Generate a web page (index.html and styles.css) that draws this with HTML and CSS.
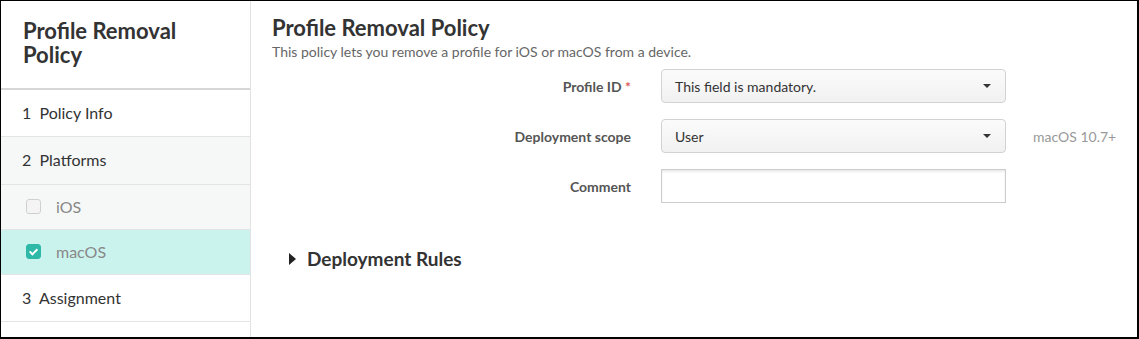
FILE: index.html
```html
<!DOCTYPE html>
<html lang="en">
<head>
  <meta charset="UTF-8" />
  <title>Profile Removal Policy</title>
  <link rel="stylesheet" href="styles.css">
</head>
<body>
  <div class="frame">
    <div class="sidebar">
      <div class="side-title">Profile Removal Policy</div>
      <div class="step s1">1&nbsp; Policy Info</div>
      <div class="step s2 grey">2&nbsp; Platforms</div>
      <div class="step s3 grey sub"><span class="check"></span>iOS</div>
      <div class="step s3 sub active"><span class="check on"></span>macOS</div>
      <div class="step s1">3&nbsp; Assignment</div>
    </div>

    <div class="main">
      <h1>Profile Removal Policy</h1>
      <p class="desc">This policy lets you remove a profile for iOS or macOS from a device.</p>

      <div class="form">
        <div class="row">
          <label>Profile ID <span class="req">*</span></label>
          <div class="select">This field is mandatory.<span class="caret"></span></div>
        </div>
        <div class="row">
          <label>Deployment scope</label>
          <div class="select">User<span class="caret"></span></div>
          <span class="hint">macOS 10.7+</span>
        </div>
        <div class="row">
          <label>Comment</label>
          <input class="text" type="text" />
        </div>
      </div>

      <div class="rules"><span class="tri"></span>Deployment Rules</div>
    </div>
  </div>
</body>
</html>
```

FILE: styles.css
```css
body {
  margin: 0;
  font-family: Lato, 'Noto Sans', sans-serif;
  color: #333;
  background: #fff;
}
.frame {
  display: flex;
  height: 339px;
  box-sizing: border-box;
  border: 1px solid #000;
  border-right-width: 2px;
  border-bottom-width: 2px;
}
.sidebar {
  width: 249px;
  border-right: 1px solid #e2e2e2;
  flex-shrink: 0;
}
.side-title {
  height: 89px;
  box-sizing: border-box;
  padding: 18px 22px 0;
  font-size: 22px;
  font-weight: 700;
  line-height: 24px;
  border-bottom: 2px solid #d6d6d6;
}
.step {
  box-sizing: border-box;
  display: flex;
  align-items: center;
  padding-left: 21px;
  padding-bottom: 2px;
  font-size: 16px;
  border-bottom: 1px solid #e4e4e4;
}
.s1 { height: 47px; }
.s2 { height: 48px; }
.s3 { height: 45px; }
.step.grey {
  background: #f6f8f8;
}
.step.sub {
  padding-left: 25px;
  color: #888;
}
.step.active {
  background: #cbf3ee;
}
.check {
  width: 13px;
  height: 13px;
  border: 1px solid #d0d0d0;
  border-radius: 3px;
  background: #f4f4f4;
  margin-right: 15px;
  position: relative;
}
.check.on {
  background: #2eb8a8;
  border-color: #2eb8a8;
}
.check.on::after {
  content: '';
  position: absolute;
  left: 4px;
  top: 2px;
  width: 3px;
  height: 6px;
  border: solid #fff;
  border-width: 0 2px 2px 0;
  transform: rotate(45deg);
}
.main {
  flex: 1;
  padding: 14px 0 0 21px;
}
h1 {
  margin: 0;
  font-size: 22px;
  font-weight: 700;
  line-height: 26px;
}
.desc {
  margin: 2px 0 0;
  font-size: 14px;
  color: #666;
}
.form {
  margin-top: 9px;
}
.row {
  display: flex;
  align-items: center;
  margin-bottom: 16px;
}
.row label {
  width: 389px;
  text-align: right;
  font-size: 14px;
  font-weight: 700;
  color: #555;
  padding-right: 30px;
  box-sizing: border-box;
}
.req {
  color: #e05a5a;
}
.select, .text {
  width: 345px;
  height: 34px;
  box-sizing: border-box;
  border: 1px solid #d2d2d2;
  border-radius: 4px;
}
.select {
  display: flex;
  align-items: center;
  justify-content: space-between;
  padding: 0 14px 0 13px;
  font-size: 14px;
  color: #333;
  background: linear-gradient(#fbfbfb, #f1f1f1);
}
.caret {
  border-left: 4px solid transparent;
  border-right: 4px solid transparent;
  border-top: 4px solid #333;
}
.text {
  border-radius: 0;
  border-color: #ccc;
  box-shadow: inset 0 2px 2px rgba(0, 0, 0, 0.08);
  font-family: inherit;
}
.hint {
  margin-left: 27px;
  font-size: 14px;
  color: #999;
}
.rules {
  display: flex;
  align-items: center;
  margin-top: 44px;
  padding-left: 17px;
  font-size: 19px;
  font-weight: 700;
}
.tri {
  border-top: 6px solid transparent;
  border-bottom: 6px solid transparent;
  border-left: 7px solid #222;
  margin-right: 11px;
}
```
